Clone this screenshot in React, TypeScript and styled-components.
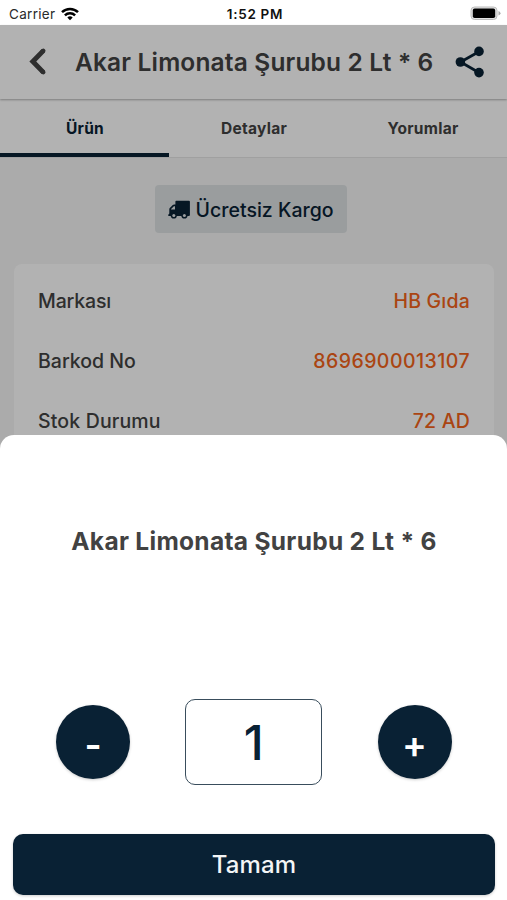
import React from "react";
import styled, { createGlobalStyle } from "styled-components";

const navy = "#092134";

const GlobalStyle = createGlobalStyle`
  * { box-sizing: border-box; }
  body { margin: 0; background: #fff; font-family: Inter, sans-serif; }
  button { font-family: inherit; border: 0; padding: 0; margin: 0; }
`;

const Screen = styled.div`
  position: relative;
  width: 507px;
  height: 900px;
  overflow: hidden;
  display: flex;
  flex-direction: column;
  background: #fff;
`;

const StatusBar = styled.div`
  display: grid;
  grid-template-columns: 1fr auto 1fr;
  align-items: center;
  height: 25px;
  flex: none;
  padding: 2px 6px 0 9px;
  font-size: 13.5px;
  line-height: 22px;
  color: #111;
`;

const Carrier = styled.div`
  display: flex;
  align-items: center;
  gap: 6px;
  letter-spacing: 0.3px;
  color: #2a2a2a;
`;

const Clock = styled.div`
  font-size: 13.5px;
  font-weight: 600;
  letter-spacing: 0.7px;
`;

const BatterySlot = styled.div`
  display: flex;
  justify-content: flex-end;
`;

const Content = styled.div`
  flex: 1;
  background: #f5f5f5;
`;

const Header = styled.header`
  position: relative;
  display: flex;
  align-items: center;
  height: 73.5px;
  padding: 0 22px 0 29px;
  background: #fff;
  box-shadow: 0 1px 2px rgba(0, 0, 0, 0.3);
`;

const Title = styled.h1`
  flex: 1;
  margin: 0 0 0 29px;
  font-size: 24.5px;
  line-height: 30px;
  font-weight: 600;
  letter-spacing: 0.16px;
  white-space: nowrap;
  color: #424242;
`;

const Tabs = styled.nav`
  display: grid;
  grid-template-columns: repeat(3, 1fr);
  height: 59px;
  background: #fff;
  border-bottom: 1px solid #e6e6e6;
`;

const Tab = styled.div<{ $active?: boolean }>`
  display: flex;
  align-items: center;
  justify-content: center;
  height: 58.5px;
  padding: 5px 0 0 1px;
  border-bottom: 4px solid ${(p) => (p.$active ? navy : "transparent")};
  font-size: 15.5px;
  font-weight: 700;
  letter-spacing: 0.28px;
  color: ${(p) => (p.$active ? navy : "#424242")};
`;

const Badge = styled.div`
  display: flex;
  align-items: center;
  width: 192px;
  height: 48px;
  margin: 27.5px auto 0 154.5px;
  padding: 1px 0 0 13px;
  gap: 6px;
  border-radius: 4px;
  background: #dde1e3;
  color: ${navy};
  font-size: 19.5px;
  font-weight: 500;
  letter-spacing: 0.02px;
  white-space: nowrap;
`;

const Card = styled.section`
  margin: 30.5px 13px 0 14px;
  padding: 7px 24px;
  border-radius: 8px;
  background: #fff;
`;

const Row = styled.div`
  display: flex;
  align-items: center;
  justify-content: space-between;
  height: 60.2px;
  font-size: 19.5px;
  font-weight: 500;
`;

const Label = styled.span<{ $spacing: number }>`
  letter-spacing: ${(p) => p.$spacing}px;
  color: #424242;
`;

const Value = styled.span<{ $spacing: number }>`
  letter-spacing: ${(p) => p.$spacing}px;
  color: #f4631a;
`;

const Backdrop = styled.div`
  position: absolute;
  inset: 25px 0 0;
  background: rgba(0, 0, 0, 0.3);
`;

const Sheet = styled.div`
  position: absolute;
  inset: 435.4px 0 0;
  display: flex;
  flex-direction: column;
  padding: 90.6px 12px 0 13px;
  border-radius: 14px 14px 0 0;
  background: #fff;
`;

const SheetTitle = styled.h2`
  margin: 0;
  text-align: center;
  font-size: 24.5px;
  line-height: 30px;
  font-weight: 700;
  letter-spacing: 0.3px;
  white-space: nowrap;
  color: #424242;
`;

const Stepper = styled.div`
  display: flex;
  align-items: center;
  justify-content: space-between;
  height: 86px;
  margin: 143.5px 43.5px 0 43px;
`;

const RoundButton = styled.button`
  display: flex;
  align-items: center;
  justify-content: center;
  width: 74px;
  height: 74px;
  padding-top: 5px;
  border-radius: 50%;
  background: ${navy};
  color: #fff;
  font-size: 37px;
  font-weight: 600;
  line-height: 38px;
  box-shadow: 0 1px 3px rgba(0, 0, 0, 0.2);
`;

const Quantity = styled.div`
  display: flex;
  align-items: center;
  justify-content: center;
  width: 137px;
  height: 86px;
  border: 1.5px solid #394d5c;
  border-radius: 10px;
  color: ${navy};
  font-size: 48px;
  font-weight: 500;
`;

const Confirm = styled.button`
  height: 61px;
  margin-top: 48.5px;
  border-radius: 10px;
  background: ${navy};
  color: #f3f5f6;
  font-size: 24px;
  font-weight: 500;
  letter-spacing: 0.1px;
  box-shadow: 0 1px 3px rgba(0, 0, 0, 0.2);
`;

const WifiIcon = () => (
  <svg width="18" height="14" viewBox="0 0 18 14" fill="none" stroke="#000" strokeWidth="2.5">
    <path d="M1 5.2a11.5 11.5 0 0 1 16 0" />
    <path d="M3.9 8.3a7.3 7.3 0 0 1 10.2 0" />
    <path d="M6.3 10.6a4 4 0 0 1 5.4 0L9 13.3z" fill="#000" stroke="none" />
  </svg>
);

const BatteryIcon = () => (
  <svg width="31" height="15" viewBox="0 0 31 15">
    <rect x="1" y="1" width="26" height="12.5" rx="3.5" fill="#e4e4e4" stroke="#bcbcbc" strokeWidth="1" />
    <rect x="2.8" y="2.6" width="22.4" height="9.4" rx="1.8" fill="#000" />
    <path d="M28.5 5v4.6q2-.8 2-2.3t-2-2.3z" fill="#aaa" />
  </svg>
);

const BackIcon = () => (
  <svg width="17" height="27" viewBox="0 0 17 27" fill="none" stroke="#424242" strokeWidth="4.9">
    <path d="M14.4 2.6 3.8 13.5l10.6 10.9" />
    <path d="M13.2 3.8l1.1-1.1M13.2 23.2l1.1 1.1" strokeLinecap="round" strokeWidth="4.2" />
  </svg>
);

const ShareIcon = () => (
  <svg width="30" height="32" viewBox="0 0 30 32" fill={navy}>
    <path d="M23.8 5.7 5.6 16l18.2 10.5" fill="none" stroke={navy} strokeWidth="2.8" />
    <circle cx="24" cy="5.4" r="4.8" />
    <circle cx="5.4" cy="16" r="4.8" />
    <circle cx="24" cy="26.6" r="4.8" />
  </svg>
);

const TruckIcon = () => (
  <svg width="22" height="19" viewBox="0 0 22 19" fill={navy}>
    <path
      fillRule="evenodd"
      d="M8.2.8H21q.9 0 .9.9v13.2q0 1-1 1H.3v-1.4q1-.2 1-1.2V9.2q0-.7.5-1.2l3-3q.5-.6 1.3-.6h1.3V1.6q0-.8.8-.8zM7 6.2H5.9L3.1 9v.4H7z"
    />
    <circle cx="5.8" cy="15.4" r="3.1" />
    <circle cx="16.4" cy="15.4" r="3.1" />
    <g fill="#dde1e3">
      <circle cx="5.8" cy="15.4" r="1.5" />
      <circle cx="16.4" cy="15.4" r="1.5" />
    </g>
  </svg>
);

const details = [
  { label: "Markası", labelSpacing: -0.15, value: "HB Gıda", valueSpacing: 0.2 },
  { label: "Barkod No", labelSpacing: 0, value: "8696900013107", valueSpacing: 0.45 },
  { label: "Stok Durumu", labelSpacing: 0.15, value: "72 AD", valueSpacing: 0.2 },
];

export default function App() {
  return (
    <>
      <GlobalStyle />
      <Screen>
        <StatusBar>
          <Carrier>
            <span>Carrier</span>
            <WifiIcon />
          </Carrier>
          <Clock>1:52 PM</Clock>
          <BatterySlot>
            <BatteryIcon />
          </BatterySlot>
        </StatusBar>
        <Content>
          <Header>
            <BackIcon />
            <Title>Akar Limonata Şurubu 2 Lt * 6</Title>
            <ShareIcon />
          </Header>
          <Tabs>
            <Tab $active>Ürün</Tab>
            <Tab>Detaylar</Tab>
            <Tab>Yorumlar</Tab>
          </Tabs>
          <Badge>
            <TruckIcon />
            <span>Ücretsiz Kargo</span>
          </Badge>
          <Card>
            {details.map((d) => (
              <Row key={d.label}>
                <Label $spacing={d.labelSpacing}>{d.label}</Label>
                <Value $spacing={d.valueSpacing}>{d.value}</Value>
              </Row>
            ))}
          </Card>
        </Content>
        <Backdrop />
        <Sheet>
          <SheetTitle>Akar Limonata Şurubu 2 Lt * 6</SheetTitle>
          <Stepper>
            <RoundButton>-</RoundButton>
            <Quantity>1</Quantity>
            <RoundButton>+</RoundButton>
          </Stepper>
          <Confirm>Tamam</Confirm>
        </Sheet>
      </Screen>
    </>
  );
}
